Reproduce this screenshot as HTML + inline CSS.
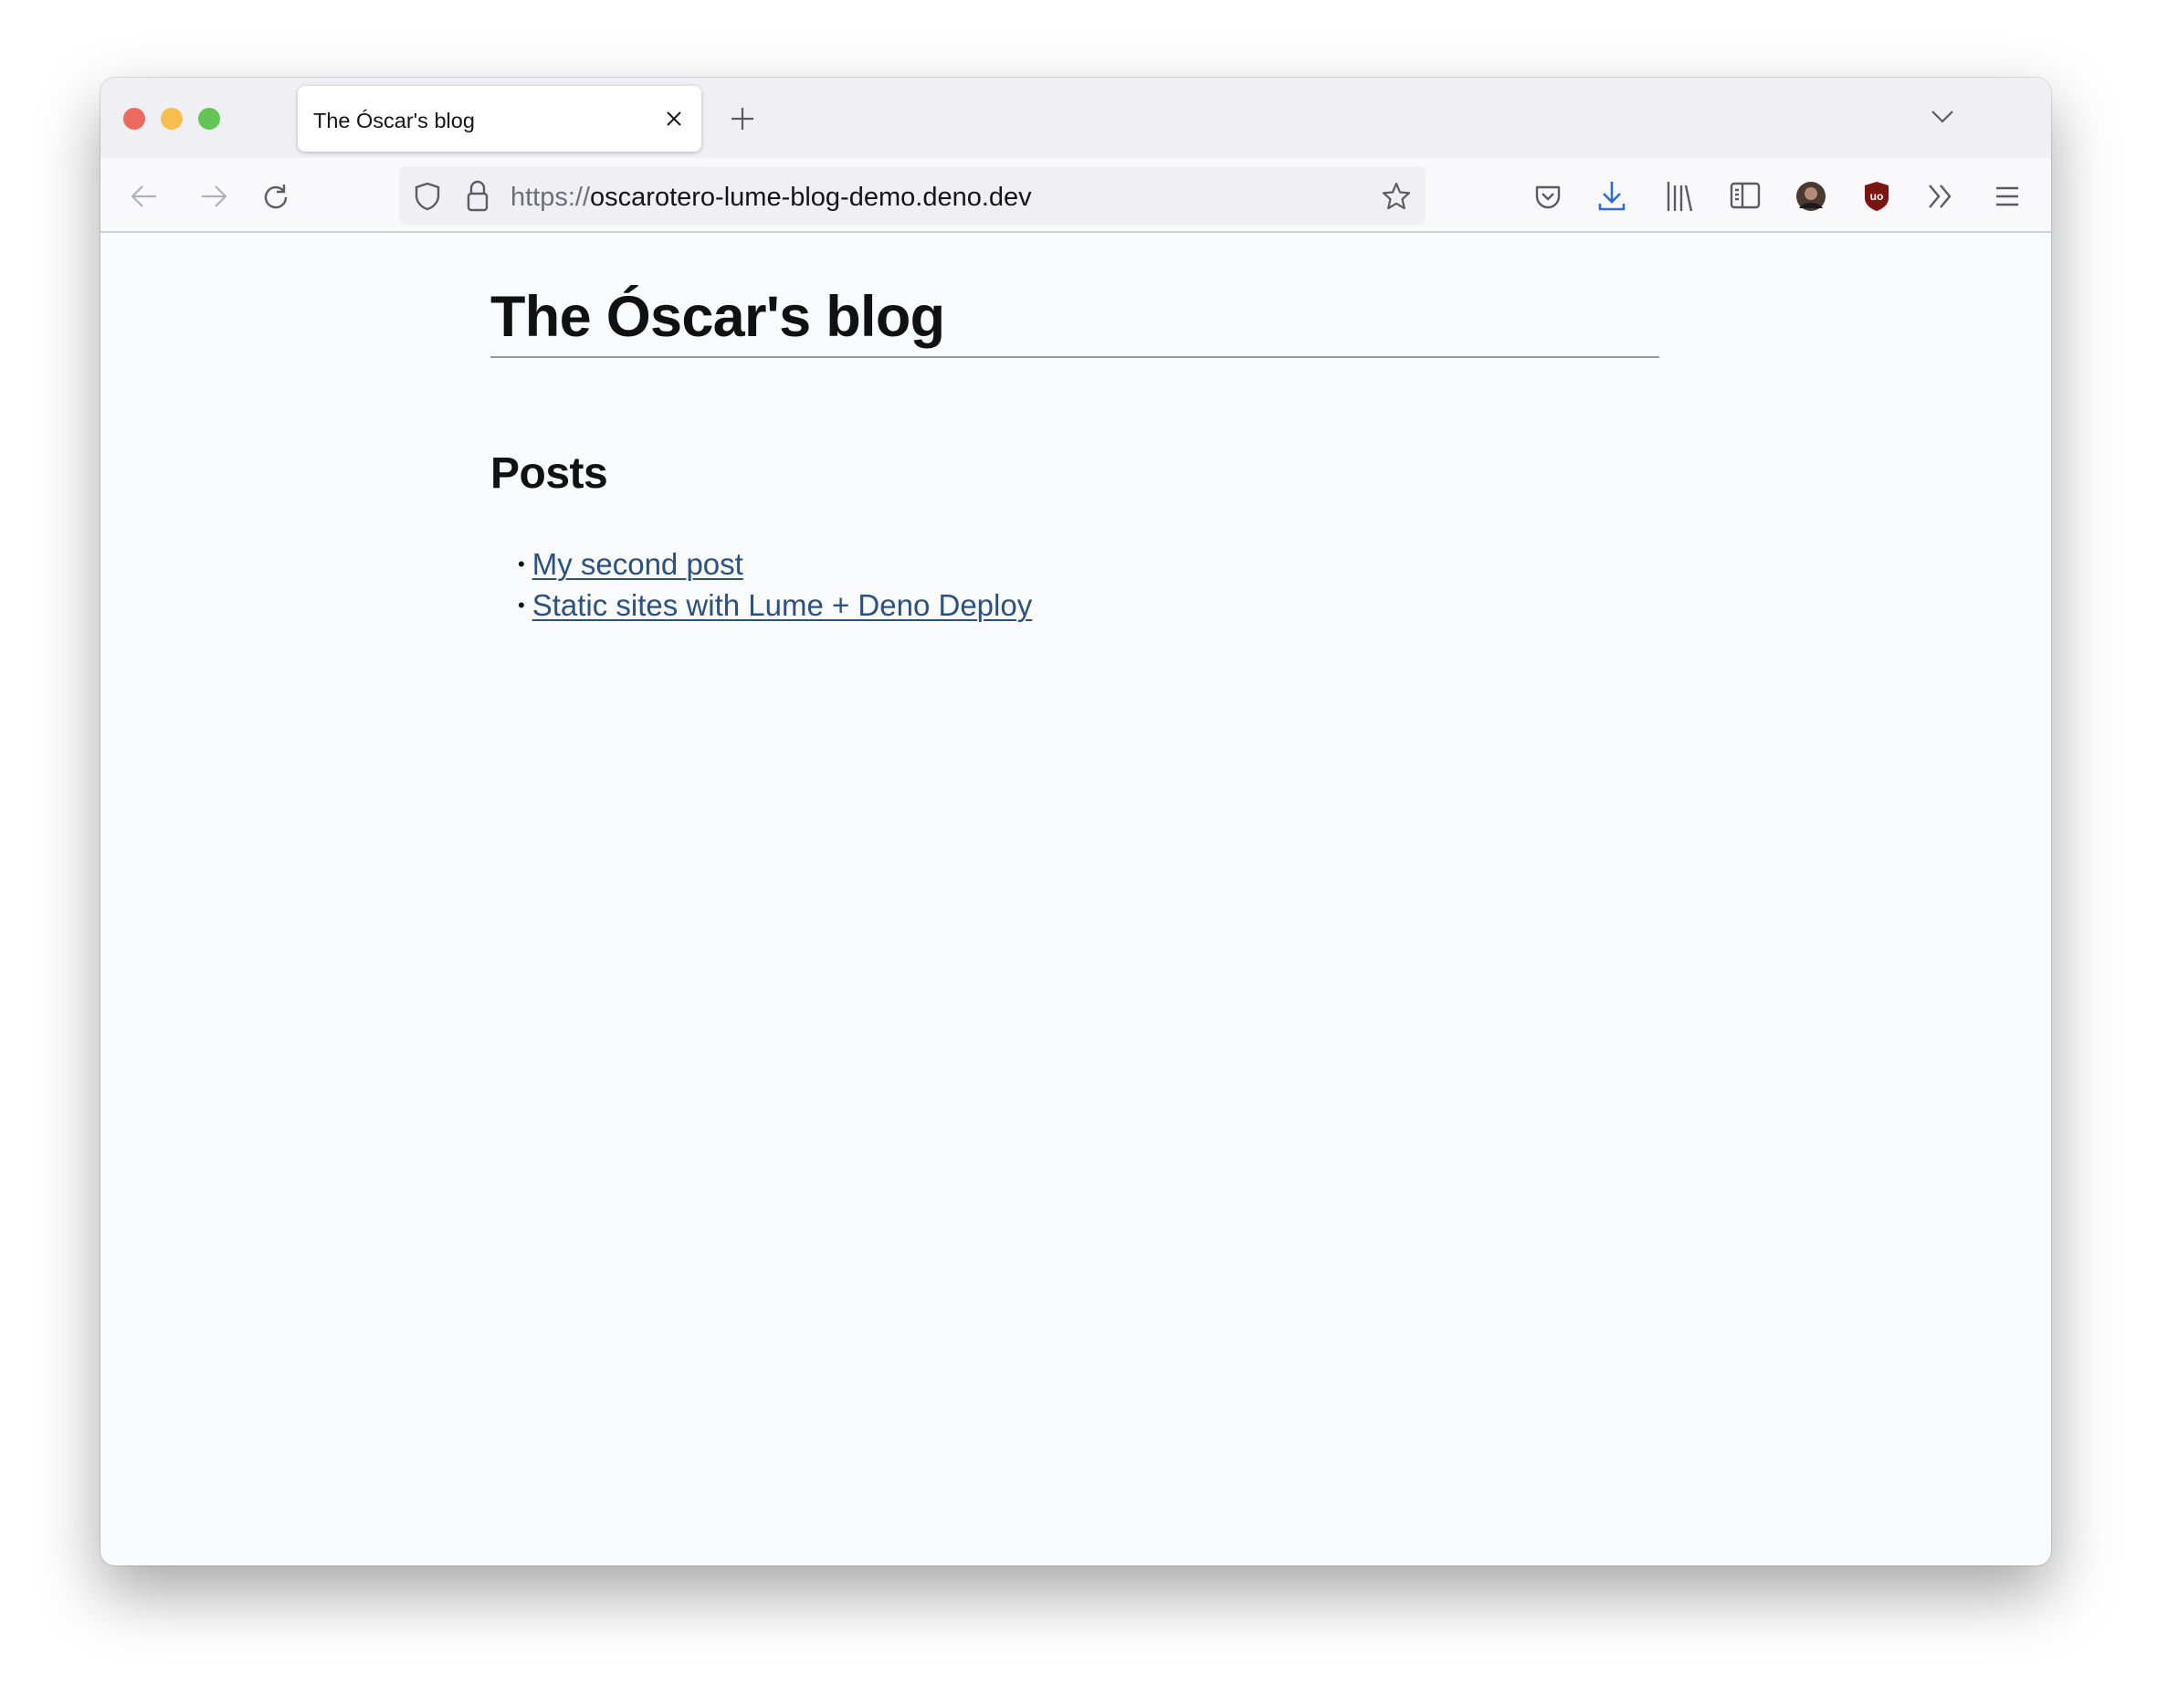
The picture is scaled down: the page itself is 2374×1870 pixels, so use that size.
<!DOCTYPE html>
<html><head><meta charset="utf-8"><style>
*{margin:0;padding:0;box-sizing:border-box}
html,body{width:2374px;height:1870px;background:#fff;overflow:hidden;font-family:"Liberation Sans",sans-serif}
.win{position:absolute;left:110px;top:85px;width:2136px;height:1629px;border-radius:16px;overflow:hidden;background:#f9fafb;box-shadow:0 30px 70px rgba(0,0,0,.35),0 0 0 1px rgba(0,0,0,.12)}
.tabbar{position:absolute;left:0;top:0;width:100%;height:88px;background:#f0f0f4}
.toolbar{position:absolute;left:0;top:88px;width:100%;height:82px;background:#f9f9fb;border-bottom:2px solid #cfcfd8}
.dot{position:absolute;top:33px;width:24px;height:24px;border-radius:50%}
.tab{position:absolute;left:216px;top:9px;width:442px;height:72px;background:#fff;border-radius:8px;box-shadow:0 1px 5px rgba(0,0,0,.25)}
.tab span{position:absolute;left:17px;top:25px;font-size:23.5px;color:#15141a}
.url{position:absolute;left:327px;top:97px;width:1124px;height:64px;background:#f0f0f4;border-radius:8px}
.url span{position:absolute;left:122px;top:18px;font-size:29px;color:#15141a}
svg{position:absolute}
h1{position:absolute;left:537px;top:311px;font-size:63px;font-weight:bold;color:#111;letter-spacing:-0.7px;white-space:nowrap}
.rule{position:absolute;left:537px;top:390px;width:1280px;height:2px;background:#999}
h2{position:absolute;left:537px;top:491px;font-size:48px;font-weight:bold;color:#111;letter-spacing:-.5px}
ul{position:absolute;left:567px;top:595px;list-style:none;font-size:33px}
li{height:45px;line-height:45px;white-space:nowrap}
li::before{content:"•";color:#111;font-size:22px;position:relative;top:-4px;margin-right:8px}
a{color:#2b5083;text-decoration:underline;text-underline-offset:4px;text-decoration-thickness:2px}
</style></head><body>
<div class="win">
<div class="tabbar"></div>
<div class="toolbar"></div>
<div class="dot" style="left:25px;background:#ed6a5e"></div>
<div class="dot" style="left:66px;background:#f5be4f"></div>
<div class="dot" style="left:107px;background:#62c554"></div>
<div class="tab"><span>The Óscar's blog</span>
<svg style="left:403px;top:27px" width="18" height="18" viewBox="0 0 18 18"><path d="M2 2L16 16M16 2L2 16" stroke="#15141a" stroke-width="2"/></svg></div>
<svg style="left:691px;top:32px" width="24" height="26" viewBox="0 0 24 26"><path d="M12 1V25M0 13H24" stroke="#5b5b66" stroke-width="2.2"/></svg>
<svg style="left:2005px;top:35px" width="24" height="16" viewBox="0 0 24 16"><path d="M1 2L12 13L23 2" stroke="#5b5b66" stroke-width="2.2" fill="none"/></svg>
<svg style="left:33px;top:117px" width="30" height="26" viewBox="0 0 30 26"><path d="M28 13H3M13 2L2 13L13 24" stroke="#b0b0b8" stroke-width="2.2" fill="none"/></svg>
<svg style="left:109px;top:117px" width="30" height="26" viewBox="0 0 30 26"><path d="M2 13H27M17 2L28 13L17 24" stroke="#b0b0b8" stroke-width="2.2" fill="none"/></svg>
<svg style="left:176px;top:115px" width="32" height="32" viewBox="0 0 32 32"><path d="M27 16A11 11 0 1 1 24 8.5" stroke="#5b5b66" stroke-width="2.4" fill="none"/><path d="M25 2V10H17" stroke="#5b5b66" stroke-width="2.4" fill="none"/></svg>
<div class="url"><span><span style="position:static;color:#6e6e78">https://</span>oscarotero-lume-blog-demo.deno.dev</span></div>
<svg style="left:344px;top:114px" width="28" height="32" viewBox="0 0 28 32"><path d="M14 2L26 6V15C26 23 20 28 14 30C8 28 2 23 2 15V6Z" stroke="#5b5b66" stroke-width="2.4" fill="none"/></svg>
<svg style="left:401px;top:112px" width="24" height="36" viewBox="0 0 24 36"><path d="M5 15V9A7 7 0 0 1 19 9V15" stroke="#5b5b66" stroke-width="2.4" fill="none"/><rect x="2" y="15" width="20" height="18" rx="3" stroke="#5b5b66" stroke-width="2.4" fill="none"/></svg>
<svg style="left:1403px;top:114px" width="32" height="32" viewBox="0 0 32 32"><path d="M16 2L20 11.5L30 12.3L22.5 19L24.8 29L16 23.8L7.2 29L9.5 19L2 12.3L12 11.5Z" stroke="#5b5b66" stroke-width="2.2" fill="none" stroke-linejoin="round"/></svg>
<svg style="left:1570px;top:116px" width="30" height="30" viewBox="0 0 30 30"><path d="M3 4H27V14A12 12 0 0 1 3 14Z" stroke="#5b5b66" stroke-width="2.4" fill="none" stroke-linejoin="round"/><path d="M9 11L15 17L21 11" stroke="#5b5b66" stroke-width="2.4" fill="none"/></svg>
<svg style="left:1640px;top:112px" width="30" height="36" viewBox="0 0 30 36"><path d="M15 2V24M6 15L15 24L24 15" stroke="#2f6bd6" stroke-width="2.6" fill="none"/><path d="M2 26V32H28V26" stroke="#2f6bd6" stroke-width="2.6" fill="none"/></svg>
<svg style="left:1714px;top:112px" width="30" height="36" viewBox="0 0 30 36"><path d="M3 2V34M10 6V34M17 6V34M22 6L28 34" stroke="#5b5b66" stroke-width="2.4" fill="none"/></svg>
<svg style="left:1784px;top:114px" width="34" height="30" viewBox="0 0 34 30"><rect x="2" y="2" width="30" height="26" rx="3" stroke="#5b5b66" stroke-width="2.4" fill="none"/><path d="M14 2V28M6 9H10M6 14H10M6 19H10" stroke="#5b5b66" stroke-width="2.4"/></svg>
<svg style="left:1856px;top:113px" width="34" height="34" viewBox="0 0 34 34"><circle cx="17" cy="17" r="16" fill="#4a3a32"/><circle cx="17" cy="14" r="7" fill="#b58a78"/><path d="M4 30C8 22 26 22 30 30" fill="#1b1b1b"/></svg>
<svg style="left:1930px;top:112px" width="30" height="36" viewBox="0 0 30 36"><path d="M15 2L28 6V20C28 27 21 32 15 34C9 32 2 27 2 20V6Z" fill="#7c1410"/><text x="15" y="22" font-size="12" font-weight="bold" fill="#fff" text-anchor="middle" font-family="Liberation Sans">uo</text></svg>
<svg style="left:2000px;top:116px" width="30" height="28" viewBox="0 0 30 28"><path d="M3 2L13 14L3 26M15 2L25 14L15 26" stroke="#5b5b66" stroke-width="2.4" fill="none"/></svg>
<svg style="left:2074px;top:118px" width="28" height="24" viewBox="0 0 28 24"><path d="M2 3H26M2 12H26M2 21H26" stroke="#5b5b66" stroke-width="2.4"/></svg>
</div>
<h1>The Óscar's blog</h1>
<div class="rule"></div>
<h2>Posts</h2>
<ul><li><a>My second post</a></li><li><a>Static sites with Lume + Deno Deploy</a></li></ul>
</body></html>
